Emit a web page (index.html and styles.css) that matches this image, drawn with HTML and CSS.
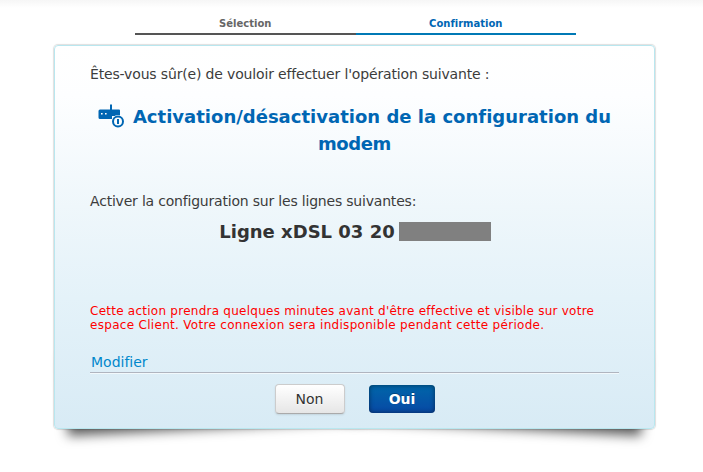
FILE: index.html
```
<!DOCTYPE html>
<html lang="fr">
<head>
<meta charset="utf-8">
<title>Confirmation</title>
<link rel="stylesheet" href="styles.css">
</head>
<body>
<ol class="steps">
  <li class="step">Sélection</li>
  <li class="step step-active">Confirmation</li>
</ol>
<main class="card">
  <div class="card-body">
    <p class="question">Êtes-vous sûr(e) de vouloir effectuer l'opération suivante :</p>
    <h1 class="title"><svg class="icon" viewBox="0 0 27 24" width="27" height="24" aria-hidden="true">
      <path d="M12 0.800q1-1 2 0V5.500h7q1 0 1 1V12H14v3H2q-1.500 0-1.500-1.500V7Q.5 5.500 2 5.500h10z" fill="#0066b3"/>
      <path d="M3 9h1.600v1.600H3zm4 0h1.600v1.600H7z" fill="#fff"/>
      <circle cx="20" cy="17.500" r="6.500" fill="#fafdfe"/>
      <circle cx="20" cy="17.500" r="5" fill="#fafdfe" stroke="#0066b3" stroke-width="2"/>
      <path d="M20 15v5" stroke="#0066b3" stroke-width="2"/>
    </svg>Activation/désactivation de la configuration du <span class="title-end">modem</span></h1>
    <p class="lines-label">Activer la configuration sur les lignes suivantes:</p>
    <div class="line">Ligne xDSL 03 20<span class="mask"></span></div>
    <p class="warning">Cette action prendra quelques minutes avant d'être effective et visible sur votre <span class="warning-end">espace Client. Votre connexion sera indisponible pendant cette période.</span></p>
    <div class="edit"><a class="edit-link">Modifier</a></div>
    <div class="actions">
      <button class="btn" type="button">Non</button>
      <button class="btn btn-primary" type="button">Oui</button>
    </div>
  </div>
</main>
</body>
</html>
```
FILE: styles.css
```
* { box-sizing: border-box; }
html { background: #fff; }
body {
  margin: 0;
  height: 472px;
  overflow: hidden;
  font: 14px/20px "DejaVu Sans", sans-serif;
  font-variant-ligatures: none;
  color: #333;
  background: linear-gradient(#f6f6f6, #fff 8px);
}
.steps {
  display: flex;
  width: 441px;
  margin: 0 0 0 135px;
  padding: 14px 0 0;
  list-style: none;
}
.step {
  flex: 1;
  height: 21px;
  border-bottom: 2px solid #555;
  font-size: 10px;
  font-weight: bold;
  line-height: 20px;
  text-align: center;
  color: #666;
}
.step-active { border-color: #0079b5; color: #0066b3; }
.card {
  position: relative;
  z-index: 0;
  width: 601px;
  height: 384px;
  margin: 10px 0 0 54px;
}
.card::before, .card::after {
  content: "";
  position: absolute;
  z-index: -1;
  bottom: 16px;
  left: 11px;
  width: 50%;
  max-width: 300px;
  height: 20%;
  box-shadow: 0 15px 12px rgba(0, 0, 0, .65);
  transform: rotate(-3deg);
}
.card::after { left: auto; right: 11px; transform: rotate(3deg); }
.card-body {
  height: 100%;
  padding: 18px 35px 0;
  border: 1px solid #b9e7ef;
  border-radius: 4px;
  background: linear-gradient(#fff, #fdfeff 13%, #eff7fb 42%, #e4f2f9 66%, #d8ebf5);
  box-shadow: 0 0 1px 1px rgba(0, 0, 0, .13);
}
.question, .title, .lines-label, .warning { margin: 0; }
.question { color: #3c3c3c; letter-spacing: -.16px; }
.title {
  margin-top: 19px;
  font-size: 18px;
  line-height: 27px;
  letter-spacing: .01px;
  text-align: center;
  color: #0066b3;
}
.title-end { letter-spacing: -.4px; }
.icon { margin-right: 8px; vertical-align: -5px; }
.lines-label { margin-top: 34px; color: #3c3c3c; letter-spacing: -.2px; }
.line {
  display: flex;
  justify-content: center;
  align-items: center;
  gap: 4px;
  height: 20px;
  margin: 11px 0 0 1px;
  font-size: 18px;
  font-weight: bold;
}
.mask { width: 92px; height: 19px; margin-top: -1px; background: #808080; }
.warning {
  margin-top: 62px;
  font-size: 12px;
  line-height: 14px;
  letter-spacing: .25px;
  color: #f00;
}
.warning-end { letter-spacing: .3px; }
.edit {
  height: 21px;
  margin-top: 20px;
  padding-left: 1px;
  border-bottom: 1px solid #b0b5bf;
  box-shadow: 0 1px #f2f9fc;
}
.edit-link { color: #08c; }
.actions {
  display: flex;
  justify-content: center;
  align-items: center;
  gap: 24px;
  margin-top: 11px;
}
.btn {
  width: 70px;
  height: 30px;
  padding: 0;
  border: 1px solid #ccc;
  border-bottom-color: #aaa;
  border-radius: 4px;
  background: linear-gradient(#fff, #e6e6e6);
  box-shadow: 0 1px 2px rgba(0, 0, 0, .1);
  font: 14px/20px "DejaVu Sans", sans-serif;
  color: #333;
  text-shadow: 0 1px 1px rgba(255, 255, 255, .75);
}
.btn-primary {
  width: 66px;
  height: 28px;
  padding-left: 1px;
  border: 0;
  background: linear-gradient(#0066a9, #0849a5);
  box-shadow: inset 0 0 5px rgba(0, 0, 0, .5);
  font-weight: bold;
  color: #fff;
  text-shadow: 0 -1px rgba(0, 0, 0, .25);
}
```
